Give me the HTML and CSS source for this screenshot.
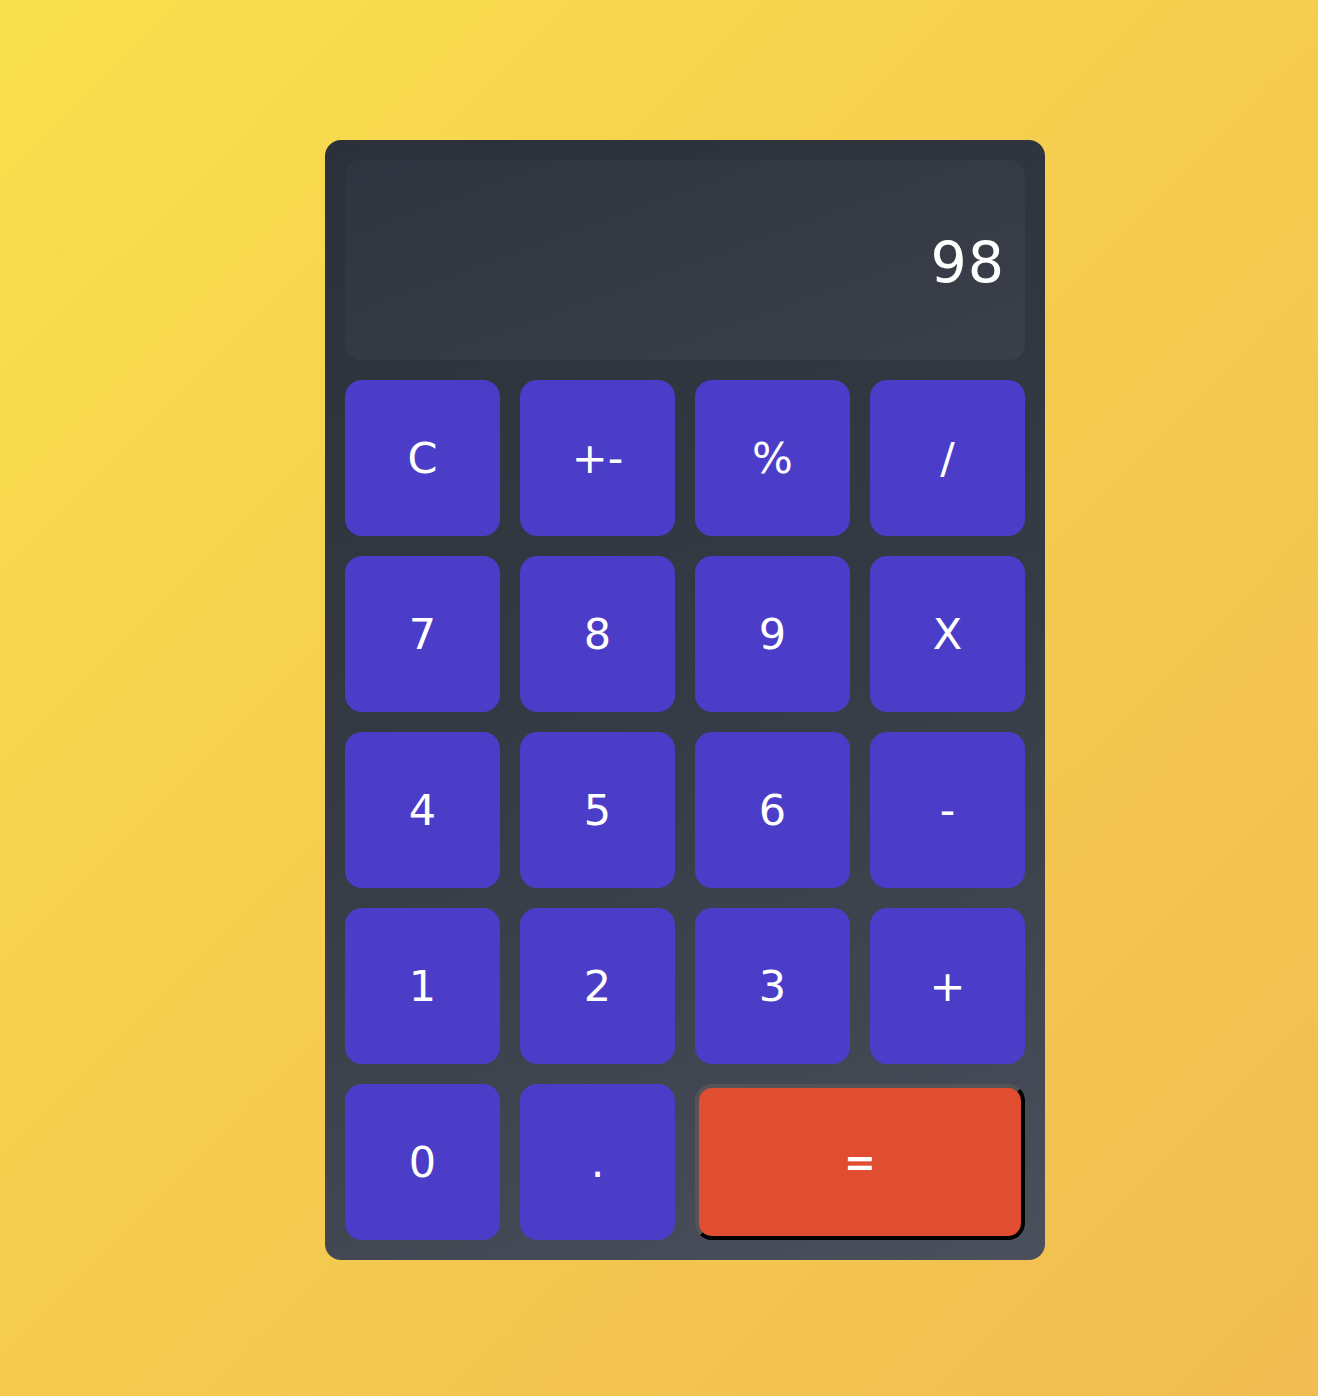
FILE: index.html
```html
<!DOCTYPE html>
<html lang="en">
<head>
<meta charset="utf-8">
<title>Calculator</title>
<link rel="stylesheet" href="styles.css">
</head>
<body>
<main class="page">
  <div class="calculator">
    <div class="display">98</div>
    <div class="keys">
      <button class="key">C</button>
      <button class="key">+-</button>
      <button class="key">%</button>
      <button class="key">/</button>
      <button class="key">7</button>
      <button class="key">8</button>
      <button class="key">9</button>
      <button class="key">X</button>
      <button class="key">4</button>
      <button class="key">5</button>
      <button class="key">6</button>
      <button class="key">-</button>
      <button class="key">1</button>
      <button class="key">2</button>
      <button class="key">3</button>
      <button class="key">+</button>
      <button class="key">0</button>
      <button class="key">.</button>
      <button class="key key-equals">=</button>
    </div>
  </div>
</main>
</body>
</html>
```
FILE: styles.css
```css
html {
  min-height: 100%;
  background: linear-gradient(135deg, #f9e04d 0%, #f5cc4f 50%, #f1bc51 100%);
}
body {
  margin: 0;
  min-height: 1396px;
  font-family: "DejaVu Sans", "Noto Sans", sans-serif;
}
.page {
  padding: 140px 0 0 325px;
}
.calculator {
  width: 720px;
  box-sizing: border-box;
  padding: 20px;
  border-radius: 16px;
  background: linear-gradient(160deg, #2b3039 0%, #353a44 50%, #4a505c 100%);
  display: flex;
  flex-direction: column;
  gap: 20px;
}
.display {
  height: 200px;
  box-sizing: border-box;
  border-radius: 16px;
  background: linear-gradient(160deg, #2f3440 0%, #3a3f4a 100%);
  color: #ffffff;
  font-size: 57px;
  display: flex;
  align-items: center;
  justify-content: flex-end;
  padding: 6px 20px 0 20px;
  letter-spacing: 1px;
}
.keys {
  display: grid;
  grid-template-columns: repeat(4, 155px);
  grid-auto-rows: 156px;
  gap: 20px;
}
.key {
  border: none;
  border-radius: 17px;
  background: #4c3dc9;
  color: #ffffff;
  font-family: "DejaVu Sans", "Noto Sans", sans-serif;
  font-size: 43px;
  display: flex;
  align-items: center;
  justify-content: center;
  padding: 0;
}
.key-equals {
  grid-column: span 2;
  background: #e14d31;
  border-style: solid;
  border-width: 4px;
  border-color: #545454 #000000 #000000 #545454;
  font-size: 38px;
  font-weight: bold;
}
```
